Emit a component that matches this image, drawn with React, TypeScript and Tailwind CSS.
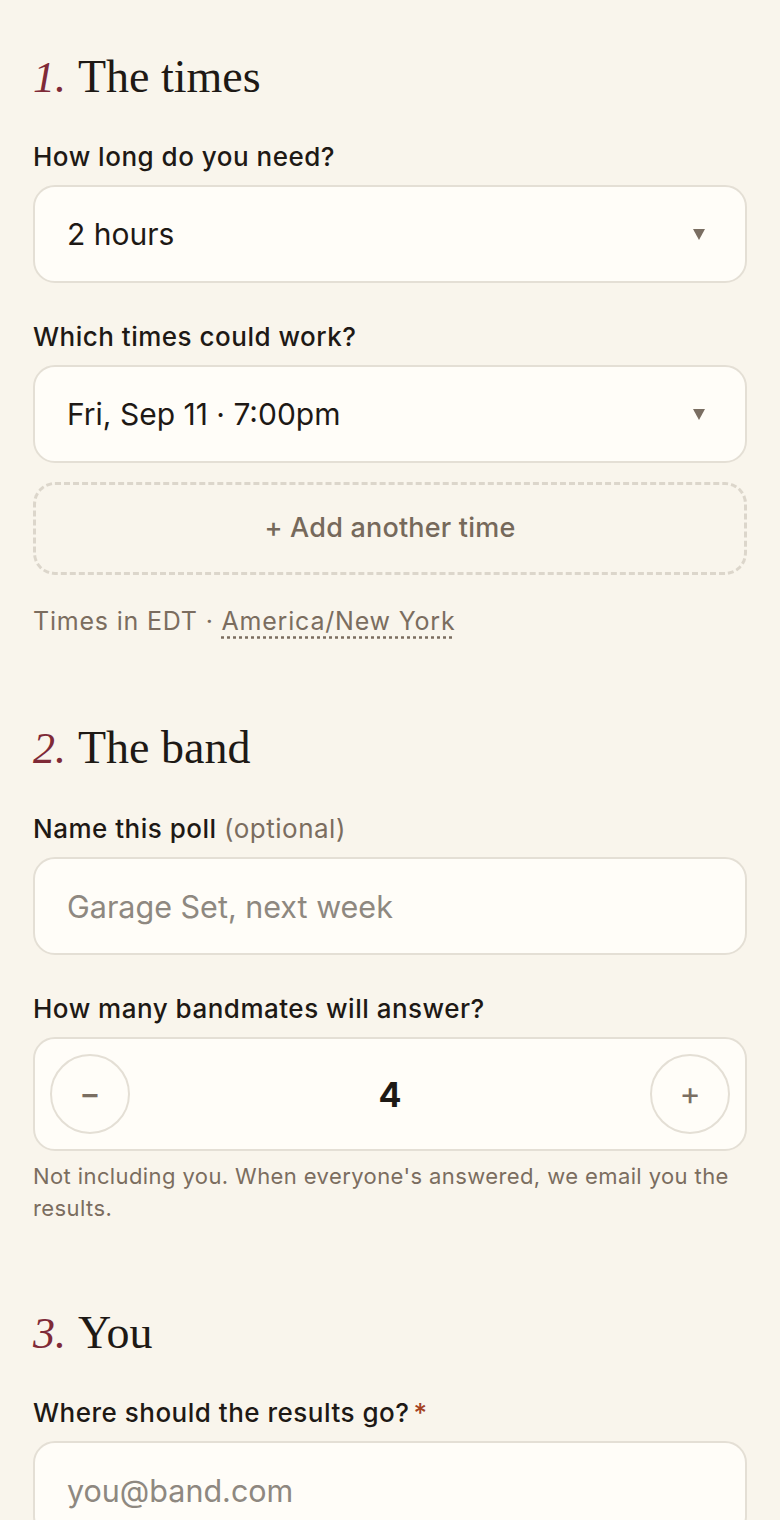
import * as React from 'react';

const sans = "font-['Inter',_'Liberation_Sans',_sans-serif]";

const SectionTitle = ({ num, title }: { num: string; title: string }) => (
  <h2 className="flex items-baseline gap-[12px] h-[52px] leading-[52px] font-['Liberation_Serif',_serif] text-[#1e1915]">
    <span className="italic text-[44px] text-[#7f2a37]">{num}</span>
    <span className="text-[46px]">{title}</span>
  </h2>
);

const Label = ({ children }: { children: React.ReactNode }) => (
  <label className={`${sans} block h-[32px] leading-[32px] text-[26px] font-medium text-[#1e1915] tracking-[0.5px]`}>
    {children}
  </label>
);

const Caret = () => (
  <svg width="12" height="12" viewBox="0 0 12 12" className="shrink-0">
    <polygon points="0,1 12,1 6,12" fill="#7a6e62" />
  </svg>
);

const SelectBox = ({ value }: { value: string }) => (
  <div className="flex items-center justify-between h-[98px] rounded-[22px] border-2 border-[#e4dfd5] bg-[#fffdf8] pl-[32px] pr-[40px]">
    <span className={`${sans} text-[30px] text-[#1e1915]`}>{value}</span>
    <Caret />
  </div>
);

export default function App() {
  const [count, setCount] = React.useState(4);

  return (
    <div className="min-h-screen bg-[#f9f5ec] px-[33px] pt-[51px] pb-10">
      {/* 1. times */}
      <section className="flex flex-col">
        <SectionTitle num="1." title="The times" />
        <div className="mt-[38px] flex flex-col gap-[12px]">
          <Label>How long do you need?</Label>
          <SelectBox value="2 hours" />
        </div>
        <div className="mt-[38px] flex flex-col gap-[12px]">
          <Label>Which times could work?</Label>
          <SelectBox value="Fri, Sep 11 · 7:00pm" />
        </div>
        <button className={`${sans} mt-[19px] h-[93px] rounded-[22px] border-[3px] border-dashed border-[#dcd6cb] text-[27px] font-medium text-[#76695b] tracking-[0.2px]`}>
          + Add another time
        </button>
        <p className={`${sans} mt-[30px] h-[32px] leading-[32px] text-[25px] text-[#7b6d5f] tracking-[0.8px]`}>
          Times in EDT ·{' '}
          <span className="underline decoration-dotted decoration-[#7b6d5f] underline-offset-[6px]">America/New York</span>
        </p>
      </section>

      {/* 2. band */}
      <section className="mt-[85px] flex flex-col">
        <SectionTitle num="2." title="The band" />
        <div className="mt-[39px] flex flex-col gap-[12px]">
          <Label>
            Name this poll <span className="font-normal text-[#7b6d5f]">(optional)</span>
          </Label>
          <input
            placeholder="Garage Set, next week"
            className={`${sans} h-[98px] rounded-[22px] border-2 border-[#e4dfd5] bg-[#fffdf8] px-[32px] text-[30.5px] text-[#1e1915] placeholder:text-[#8e8880] outline-none`}
          />
        </div>
        <div className="mt-[38px] flex flex-col gap-[12px]">
          <Label>How many bandmates will answer?</Label>
          <div className="flex items-center justify-between h-[114px] rounded-[22px] border-2 border-[#e4dfd5] bg-[#fffdf8] px-[15px]">
            <button
              onClick={() => setCount((c) => Math.max(1, c - 1))}
              className={`${sans} w-[80px] h-[80px] rounded-full border-2 border-[#e4dfd5] flex items-center justify-center text-[32px] font-medium text-[#7a6e62]`}
            >
              −
            </button>
            <span className={`${sans} text-[34px] font-bold text-[#1e1915]`}>{count}</span>
            <button
              onClick={() => setCount((c) => c + 1)}
              className={`${sans} w-[80px] h-[80px] rounded-full border-2 border-[#e4dfd5] flex items-center justify-center text-[32px] text-[#7a6e62]`}
            >
              +
            </button>
          </div>
        </div>
        <p className={`${sans} mt-[9px] text-[22px] leading-[32px] text-[#7b6d5f] tracking-[0.4px]`}>
          Not including you. When everyone's answered, we email you the results.
        </p>
      </section>

      {/* 3. you */}
      <section className="mt-[83px] flex flex-col">
        <SectionTitle num="3." title="You" />
        <div className="mt-[38px] flex flex-col gap-[12px]">
          <Label>
            Where should the results go?<span className="ml-[4px] text-[#a4421f]">*</span>
          </Label>
          <input
            type="email"
            placeholder="you@band.com"
            className={`${sans} h-[98px] rounded-[22px] border-2 border-[#e4dfd5] bg-[#fffdf8] px-[32px] text-[30.5px] text-[#1e1915] placeholder:text-[#8e8880] outline-none`}
          />
        </div>
      </section>
    </div>
  );
}
